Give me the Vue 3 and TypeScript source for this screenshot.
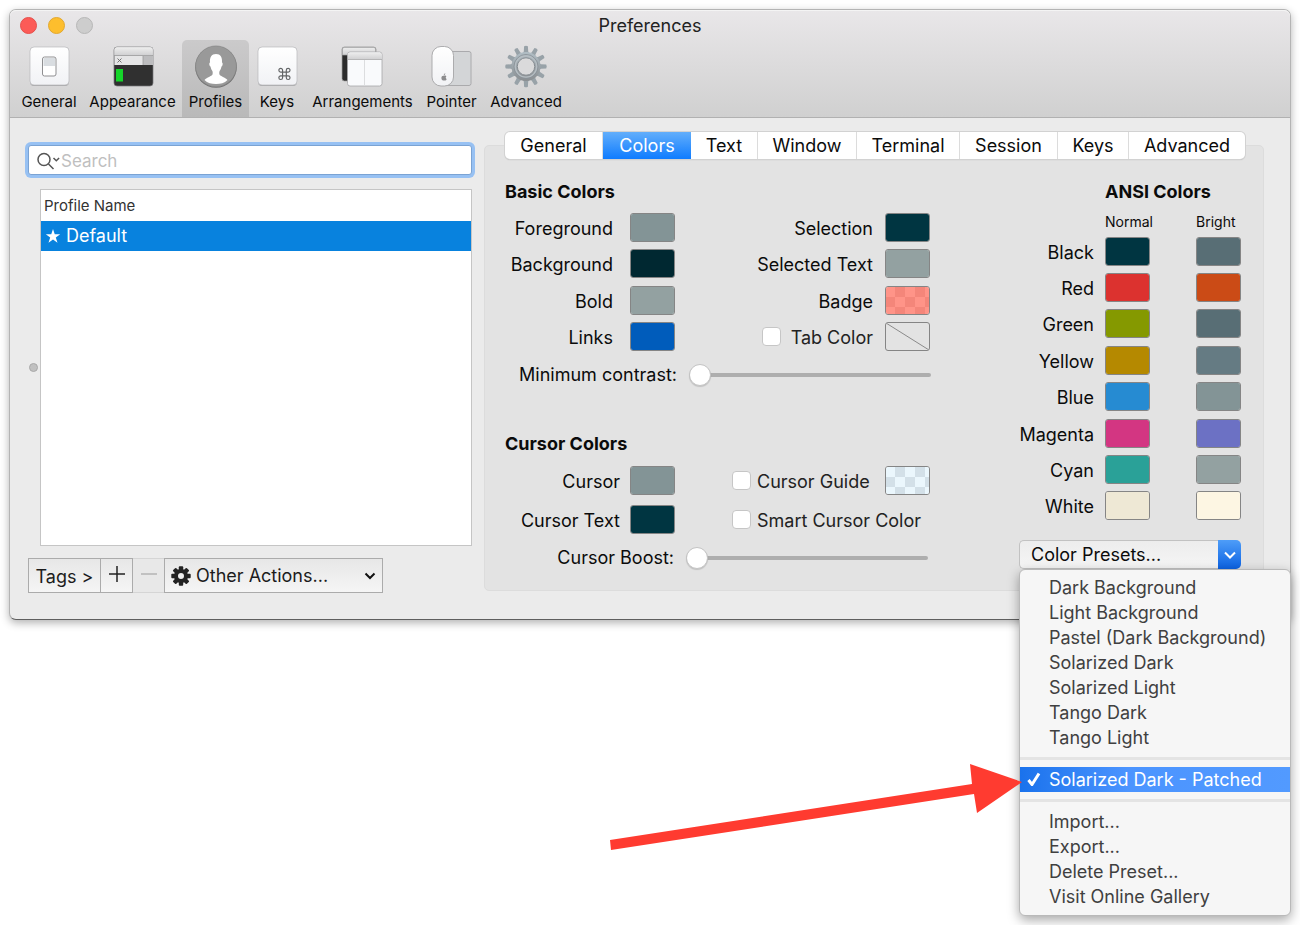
<script setup lang="ts">
import { ref } from 'vue'

interface Well {
  id: string
  label: string
  color: string
}

const tools = ['General', 'Appearance', 'Profiles', 'Keys', 'Arrangements', 'Pointer', 'Advanced']
const activeTool = ref('Profiles')

const tabs = ['General', 'Colors', 'Text', 'Window', 'Terminal', 'Session', 'Keys', 'Advanced']
const activeTab = ref('Colors')

const basic: Well[] = [
  { id: 'foreground', label: 'Foreground', color: '#839496' },
  { id: 'selection', label: 'Selection', color: '#003541' },
  { id: 'background', label: 'Background', color: '#002831' },
  { id: 'selected-text', label: 'Selected Text', color: '#93a1a1' },
  { id: 'bold', label: 'Bold', color: '#93a1a1' },
  { id: 'badge', label: 'Badge', color: '#ff9488' },
  { id: 'links', label: 'Links', color: '#005cbb' },
]

const ansi = [
  { name: 'Black', normal: '#003541', bright: '#586e75' },
  { name: 'Red', normal: '#dc322f', bright: '#cb4b16' },
  { name: 'Green', normal: '#859900', bright: '#586e75' },
  { name: 'Yellow', normal: '#b58900', bright: '#657b83' },
  { name: 'Blue', normal: '#268bd2', bright: '#839496' },
  { name: 'Magenta', normal: '#d33682', bright: '#6c71c4' },
  { name: 'Cyan', normal: '#2aa198', bright: '#93a1a1' },
  { name: 'White', normal: '#eee8d5', bright: '#fdf6e3' },
]

const presetGroups = [
  ['Dark Background', 'Light Background', 'Pastel (Dark Background)', 'Solarized Dark', 'Solarized Light', 'Tango Dark', 'Tango Light'],
  ['Solarized Dark - Patched'],
  ['Import...', 'Export...', 'Delete Preset...', 'Visit Online Gallery'],
]
const activePreset = ref('Solarized Dark - Patched')

const query = ref('')
const contrast = ref(0)
const boost = ref(0)
const teeth = Array.from({ length: 12 }, (_, i) => i * 30)
const cogTeeth = Array.from({ length: 8 }, (_, i) => i * 45)
</script>

<template>
  <main class="desktop">
    <section class="window" aria-label="Preferences">
      <header class="toolbar">
        <div class="titlebar">
          <div class="lights">
            <button class="light red" aria-label="Close"></button>
            <button class="light yellow" aria-label="Minimize"></button>
            <button class="light grey" aria-label="Zoom" disabled></button>
          </div>
          <h1>Preferences</h1>
        </div>
        <nav class="tools">
          <button
            v-for="tool in tools"
            :key="tool"
            class="tool"
            :class="{ active: tool === activeTool }"
            @click="activeTool = tool"
          >
            <svg class="tool-icon" viewBox="0 0 44 44" aria-hidden="true">
              <defs>
                <linearGradient :id="'face-' + tool" x1="0" y1="0" x2="0" y2="1">
                  <stop offset="0" stop-color="#ffffff" />
                  <stop offset="1" stop-color="#f1f2f5" />
                </linearGradient>
                <linearGradient :id="'metal-' + tool" gradientUnits="userSpaceOnUse" x1="0" y1="2" x2="0" y2="43">
                  <stop offset="0" stop-color="#b9c8d0" />
                  <stop offset="1" stop-color="#828486" />
                </linearGradient>
                <linearGradient :id="'bar-' + tool" x1="0" y1="0" x2="0" y2="1">
                  <stop offset="0" stop-color="#eeeeee" />
                  <stop offset="1" stop-color="#cfcfd1" />
                </linearGradient>
              </defs>
              <g v-if="tool === 'General'">
                <rect x="3" y="3" width="39" height="39" rx="4" fill="#a9a9ab" />
                <rect x="3" y="3" width="39" height="38" rx="4" :fill="`url(#face-${tool})`" stroke="#b9b9bb" stroke-width=".7" />
                <rect x="15.500" y="13" width="13.500" height="19" rx="2" fill="#fff" stroke="#8f8f91" />
                <rect x="16.500" y="14" width="11.500" height="8" fill="#d9dde1" />
              </g>
              <g v-else-if="tool === 'Appearance'">
                <rect x="3" y="3" width="39" height="39" rx="3" fill="#303030" stroke="#77777a" stroke-width=".7" />
                <path d="M3.400 21V6a2.700 2.700 0 0 1 2.700-2.700h33a2.700 2.700 0 0 1 2.700 2.700v15z" fill="#e5e5e6" />
                <path d="M3.400 11.500V6a2.700 2.700 0 0 1 2.700-2.700h33a2.700 2.700 0 0 1 2.700 2.700v5.500z" :fill="`url(#bar-${tool})`" />
                <path d="M32 12h9.800v9H32z" fill="#bcbcbe" />
                <path d="M3 11.500h39M32 12v9" stroke="#99999b" stroke-width=".8" />
                <path d="m6.500 14.500 4 4m0-4-4 4" stroke="#666" stroke-width=".9" />
                <rect x="5" y="25" width="7" height="12.500" fill="#15d62a" />
              </g>
              <g v-else-if="tool === 'Profiles'">
                <circle cx="22" cy="23" r="20.800" fill="#707070" />
                <circle cx="22" cy="22.300" r="20.400" fill="#999" stroke="#858585" stroke-width=".6" />
                <path d="M10.500 36c2.500-3 7-3.600 8-5.600.4-1.200.2-2.400-.1-3.400-1-1-1.500-2.600-1.900-4.400-1.200-.4-1.700-3.700-.5-4.100C15.600 13.200 17.500 10 22 10s6.400 3.200 6 8.500c1.200.4.7 3.700-.5 4.100-.4 1.800-.9 3.400-1.900 4.400-.3 1-.5 2.200-.1 3.400 1 2 5.500 2.600 8 5.600-3 3-7 4-11.500 4s-8.500-1-11.500-4z" fill="#fff" />
              </g>
              <g v-else-if="tool === 'Keys'">
                <rect x="3" y="3" width="39" height="39" rx="4" fill="#a9a9ab" />
                <rect x="3" y="3" width="39" height="38" rx="4" :fill="`url(#face-${tool})`" stroke="#b9b9bb" stroke-width=".7" />
                <path transform="translate(22 22.500) scale(.62)" d="M15 6v12a3 3 0 1 0 3-3H6a3 3 0 1 0 3 3V6a3 3 0 1 0-3 3h12a3 3 0 1 0-3-3" fill="none" stroke="#626466" stroke-width="1.900" />
              </g>
              <g v-else-if="tool === 'Arrangements'" transform="translate(-1 0)">
                <rect x="2" y="3" width="34" height="34" rx="2.500" fill="#2c2c2c" stroke="#a0a0a0" stroke-width=".7" />
                <path d="M2.300 11V5.500a2.200 2.200 0 0 1 2.200-2.200h29a2.200 2.200 0 0 1 2.200 2.200V11z" :fill="`url(#bar-${tool})`" stroke="#a0a0a2" stroke-width=".7" />
                <rect x="7.500" y="8" width="34.500" height="34" rx="2.500" fill="#f9fafc" stroke="#a6a6a8" stroke-width=".8" />
                <path d="M7.900 15.500v-5a2.200 2.200 0 0 1 2.200-2.100h29.500a2.200 2.200 0 0 1 2.100 2.100v5z" :fill="`url(#bar-${tool})`" />
                <path d="M7.500 15.500H42" stroke="#a9a9ab" stroke-width=".8" />
                <path d="M24.500 16v25.500" stroke="#dcdddf" />
              </g>
              <g v-else-if="tool === 'Pointer'" transform="translate(-1 0)">
                <rect x="14" y="7.500" width="28" height="34" rx="2" fill="#d3d5d7" stroke="#a5a5a7" stroke-width=".9" />
                <rect x="3" y="2.500" width="21.500" height="39.500" rx="9" :fill="`url(#face-${tool})`" stroke="#a5a5a7" stroke-width=".9" />
                <path d="M15 31.800c1.200-.6 2-.3 2.400.4-1 .8-.8 2.300.3 2.700-.6 1.600-1.400 2-2.700 1.500-1.500.6-2.700-.8-2.600-2.700.1-1.600 1.300-2.400 2.600-1.900zM14.800 31.200c0-1 .6-1.700 1.500-1.900 0 1-.6 1.700-1.500 1.900z" fill="#8c8c8e" />
              </g>
              <g v-else>
                <path
                  v-for="angle in teeth"
                  :key="angle"
                  :transform="`rotate(${angle} 22 22.500)`"
                  d="M18 10.500 19.800 7.500 20.100 2.300Q22 1.200 23.900 2.300L24.200 7.500 26 10.500z"
                  fill="#98a2a8"
                />
                <circle cx="22" cy="22.500" r="11.500" fill="none" :stroke="`url(#metal-${tool})`" stroke-width="6" />
                <circle cx="22" cy="22.500" r="12" fill="none" stroke="#8a9298" stroke-width=".9" />
                <circle cx="22" cy="22.500" r="10.700" fill="none" stroke="#b6bec3" stroke-width="1.200" />
                <circle cx="22" cy="22.500" r="8.700" fill="#dadadb" stroke="#7f868b" stroke-width=".9" />
              </g>
            </svg>
            <span>{{ tool }}</span>
          </button>
        </nav>
      </header>

      <div class="body">
        <aside class="profiles">
          <div class="search">
            <svg class="search-icon" viewBox="0 0 24 18" aria-hidden="true">
              <circle cx="7" cy="7.500" r="6" />
              <path d="m11.500 12 5 5M16.500 6l2.800 2.800L22.100 6" />
            </svg>
            <input v-model="query" type="search" placeholder="Search" aria-label="Search profiles" />
          </div>
          <div class="list-row">
            <div class="splitter"><span class="grip"></span></div>
            <div class="list">
              <table>
                <thead>
                  <tr><th scope="col">Profile Name</th></tr>
                </thead>
                <tbody>
                  <tr class="selected">
                    <td>
                      <svg class="star" viewBox="0 0 16 16" aria-hidden="true">
                        <path d="m8 1 1.750 5.200h5.450l-4.400 3.200 1.700 5.300L8 11.500l-4.500 3.200 1.700-5.300-4.400-3.200h5.450z" />
                      </svg>Default
                    </td>
                  </tr>
                </tbody>
              </table>
            </div>
          </div>
          <div class="actions">
            <button class="action tags">Tags &gt;</button>
            <button class="action square" aria-label="Add profile">
              <svg viewBox="0 0 16 16" aria-hidden="true"><path d="M8 0v16M0 8h16" /></svg>
            </button>
            <button class="action square faded" aria-label="Remove profile" disabled>
              <svg viewBox="0 0 16 16" aria-hidden="true"><path d="M0 8h16" /></svg>
            </button>
            <div class="other">
              <svg class="cog" viewBox="0 0 20 20" aria-hidden="true">
                <path v-for="angle in cogTeeth" :key="angle" :transform="`rotate(${angle} 10 10)`" d="M7.800 6V1.200Q7.800.3 8.700.3h2.600q.9 0 .9.900V6z" />
                <circle cx="10" cy="10" r="5" />
              </svg>
              <select aria-label="Other actions">
                <option>Other Actions...</option>
              </select>
              <svg class="chevron" viewBox="0 0 12 8" aria-hidden="true"><path d="m1.500 1.500 4.500 4.500 4.500-4.500" /></svg>
            </div>
          </div>
        </aside>

        <div class="settings">
          <div class="tabs" role="tablist">
            <button
              v-for="tab in tabs"
              :key="tab"
              role="tab"
              :aria-selected="tab === activeTab"
              :class="{ active: tab === activeTab }"
              @click="activeTab = tab"
            >{{ tab }}</button>
          </div>
          <div class="panel">
            <div class="sections">
              <h2>Basic Colors</h2>
              <div class="basic-grid">
                <template v-for="well in basic" :key="well.id">
                  <label :for="well.id">{{ well.label }}</label>
                  <input :id="well.id" class="well" :class="well.id" type="color" :value="well.color" />
                </template>
                <div class="check tab-check">
                  <input id="tab-color" type="checkbox" /><label for="tab-color">Tab Color</label>
                </div>
                <button class="well empty" aria-label="Tab color value">
                  <svg viewBox="0 0 43 27" preserveAspectRatio="none" aria-hidden="true"><path d="M0 0 43 27" /></svg>
                </button>
              </div>
              <div class="slider contrast">
                <label for="contrast">Minimum contrast:</label>
                <input id="contrast" v-model="contrast" type="range" min="0" max="100" />
              </div>

              <h2>Cursor Colors</h2>
              <div class="cursor-grid">
                <label for="cursor">Cursor</label>
                <input id="cursor" class="well" type="color" value="#839496" />
                <div class="check">
                  <input id="guide" type="checkbox" /><label for="guide">Cursor Guide</label>
                </div>
                <input class="well guide" type="color" value="#ebf7fd" aria-label="Cursor guide color" />
                <label for="cursor-text">Cursor Text</label>
                <input id="cursor-text" class="well" type="color" value="#003541" />
                <div class="check wide">
                  <input id="smart" type="checkbox" /><label for="smart">Smart Cursor Color</label>
                </div>
              </div>
              <div class="slider">
                <label for="boost">Cursor Boost:</label>
                <input id="boost" v-model="boost" type="range" min="0" max="100" />
              </div>
            </div>

            <div class="ansi">
              <h2>ANSI Colors</h2>
              <table>
                <thead>
                  <tr>
                    <td></td>
                    <th scope="col">Normal</th>
                    <th scope="col">Bright</th>
                  </tr>
                </thead>
                <tbody>
                  <tr v-for="row in ansi" :key="row.name">
                    <th scope="row">{{ row.name }}</th>
                    <td><input class="well" type="color" :value="row.normal" :aria-label="row.name + ' normal'" /></td>
                    <td><input class="well" type="color" :value="row.bright" :aria-label="row.name + ' bright'" /></td>
                  </tr>
                </tbody>
              </table>
              <div class="presets">
                <select aria-label="Color presets">
                  <option>Color Presets...</option>
                </select>
                <span class="cap">
                  <svg viewBox="0 0 12 8" aria-hidden="true"><path d="m1 1.500 5 5 5-5" /></svg>
                </span>
                <div class="menu" role="menu">
                  <div v-for="(group, index) in presetGroups" :key="index" class="group" role="group">
                    <button
                      v-for="preset in group"
                      :key="preset"
                      role="menuitem"
                      :class="{ active: preset === activePreset }"
                      @click="activePreset = preset"
                    >
                      <svg v-if="preset === activePreset" class="tick" viewBox="0 0 14 14" aria-hidden="true"><path d="m1.500 8 3.500 4.500L12 1.500" /></svg>
                      {{ preset }}
                    </button>
                  </div>
                  <svg class="arrow" viewBox="0 0 412 86" aria-hidden="true">
                    <path d="M0 76 362 20 360 0 412 18 367 49 364 30 1 86z" />
                  </svg>
                </div>
              </div>
            </div>
          </div>
        </div>
      </div>
    </section>
  </main>
</template>

<style>
body {
  background: #fff;
}
</style>

<style scoped>
* {
  box-sizing: border-box;
}

.desktop {
  min-height: 100vh;
  padding: 9px;
  font-family: Inter, "Liberation Sans", sans-serif;
  font-size: 18px;
  line-height: 24px;
  color: #0b0b0b;
}

button,
input,
select {
  margin: 0;
  padding: 0;
  border: 0;
  background: none;
  font: inherit;
  color: inherit;
  outline: none;
}

svg {
  display: block;
  flex: none;
}

h1,
h2 {
  margin: 0;
  font-size: 18px;
  line-height: 24px;
}

.window {
  border: 1px solid #b4b4b4;
  border-bottom-color: #5e5e5e;
  border-radius: 7px;
  background: #ebebeb;
  box-shadow: 0 3px 8px rgba(0, 0, 0, 0.3);
}

.toolbar {
  border-bottom: 1px solid #b1b1b1;
  border-radius: 6px 6px 0 0;
  background: linear-gradient(#e9e7e9, #d0d0d0);
  box-shadow: inset 0 1px #f4f4f4;
}

.titlebar {
  display: grid;
  grid-template-columns: 1fr auto 1fr;
  align-items: center;
  height: 30px;
}

h1 {
  padding-top: 2px;
  font-weight: 400;
  color: #222;
}

.lights {
  display: flex;
  gap: 11px;
  padding-left: 10px;
}

.light {
  width: 17px;
  height: 17px;
  border: 1px solid;
  border-radius: 50%;
}

.red {
  background: #fc5b57;
  border-color: #e5504c;
}

.yellow {
  background: #fdbe2d;
  border-color: #e2a830;
}

.grey {
  background: #cdcdcd;
  border-color: #b7b7b7;
}

.tools {
  display: grid;
  grid-template-columns: 68px 99px 67px 56px 115px 63px 86px;
  padding-left: 5px;
}

.tool {
  display: flex;
  flex-direction: column;
  align-items: center;
  height: 77px;
  padding-top: 4px;
  border-radius: 5px 5px 0 0;
  font-size: 15px;
  line-height: 20px;
}

.tool.active {
  background: linear-gradient(#cbcacb, #b9b9b9);
}

.tool-icon {
  width: 44px;
  height: 44px;
  margin-bottom: 4px;
}

.body {
  display: grid;
  grid-template-columns: 444fr 780fr;
  gap: 12px;
  padding: 14px 26px 26px 18px;
}

.profiles {
  display: flex;
  flex-direction: column;
  padding-top: 13px;
}

.search {
  display: flex;
  align-items: center;
  height: 30px;
  padding: 2px 0 0 8px;
  border: 1px solid #7ba3d3;
  border-radius: 3px;
  background: #fff;
  box-shadow: 0 0 0 3px #97c1f3;
}

.search-icon {
  width: 24px;
  height: 18px;
  fill: none;
  stroke: #555;
  stroke-width: 1.5;
}

.search input {
  flex: 1;
  min-width: 0;
  appearance: none;
  font-size: 17px;
}

.search input::placeholder {
  color: #bfbfbf;
  opacity: 1;
}

.list-row {
  display: flex;
  flex: 1;
  margin: 14px 0 12px;
}

.splitter {
  display: flex;
  align-items: center;
  width: 12px;
}

.grip {
  width: 9px;
  height: 9px;
  margin-left: 1px;
  border: 1px solid #a9a9a9;
  border-radius: 50%;
  background: #c0c0c0;
}

.list {
  flex: 1;
  border: 1px solid #c5c5c5;
  background: #fff;
}

.list table {
  width: 100%;
  border-collapse: collapse;
}

.list th {
  height: 31px;
  padding: 0 3px;
  font-size: 15px;
  line-height: 20px;
  font-weight: 400;
  text-align: left;
  color: #333;
}

.list td {
  display: flex;
  align-items: center;
  gap: 5px;
  height: 30px;
  padding: 0 4px;
  background: #0882de;
  color: #fff;
}

.star {
  width: 16px;
  height: 16px;
  fill: #fff;
}

.actions {
  display: flex;
}

.action,
.other {
  height: 35px;
  border: 1px solid #ababab;
  background: linear-gradient(#e7e7e7, #f5f5f5);
  color: #1c1c1c;
}

.tags {
  width: 73px;
  padding-top: 2px;
}

.square {
  display: flex;
  align-items: center;
  justify-content: center;
  width: 32px;
  padding-bottom: 3px;
  border-left: 0;
}

.square svg {
  width: 16px;
  height: 16px;
  stroke: #222;
  stroke-width: 1.5;
}

.square.faded {
  width: 31px;
  border-color: #d5d5d5;
  border-right: 0;
  background: #e8e8e8;
}

.square.faded svg {
  stroke: #b5b5b5;
}

.other {
  display: flex;
  align-items: center;
  width: 219px;
  padding: 1px 6px 0;
}

.cog {
  width: 20px;
  height: 20px;
  margin-right: 5px;
  fill: #222;
}

.cog circle {
  fill: #eee;
  stroke: #222;
  stroke-width: 4;
}

.other select {
  flex: 1;
  min-width: 0;
  appearance: none;
}

.chevron {
  width: 12px;
  height: 8px;
  fill: none;
  stroke: #111;
  stroke-width: 2;
}

.settings {
  min-width: 0;
  padding-bottom: 2px;
}

.tabs {
  position: relative;
  display: grid;
  grid-template-columns: 98fr 88fr 67fr 99fr 103fr 98fr 71fr 116fr;
  height: 27px;
  margin: 0 19px 0 21px;
  border-radius: 5px;
  background: #fff;
  box-shadow: 0 0 0 1px #d2d2d2, 0 1px 1px #aaa;
}

.tabs button {
  border-right: 1px solid #dcdcdc;
}

.tabs button:last-child {
  border-right: 0;
}

.tabs button.active {
  border-right: 0;
  background: linear-gradient(#62aefb, #0f7cff);
  color: #fff;
}

.panel {
  display: flex;
  justify-content: space-between;
  margin-top: -14px;
  padding: 34px 22px 20px 20px;
  border: 1px solid #dcdcdc;
  border-radius: 5px;
  background: #e3e3e3;
}

.sections {
  width: 426px;
}

.basic-grid,
.cursor-grid {
  display: grid;
  align-items: center;
  justify-items: end;
  width: 425px;
  margin-top: 5px;
}

.basic-grid {
  grid-template-columns: 113px 45px 1fr 45px;
  grid-auto-rows: 1fr;
  column-gap: 12px;
  height: 146px;
}

.basic-grid > label:nth-child(4n + 1) {
  padding-right: 5px;
}

.cursor-grid {
  grid-template-columns: 115px 45px minmax(0, 1fr) 45px;
  grid-auto-rows: 39px;
  column-gap: 10px;
}

.basic-grid label,
.cursor-grid label {
  padding-top: 3px;
}

.well {
  display: block;
  width: 45px;
  height: 29px;
  overflow: hidden;
  border: 1px solid #858585;
  border-radius: 3px;
  appearance: none;
}

.well::-webkit-color-swatch-wrapper {
  padding: 0;
}

.well::-webkit-color-swatch {
  border: 0;
  border-radius: 0;
}

.badge::-webkit-color-swatch {
  background-image: conic-gradient(#f4867a 25%, transparent 0 50%, #f4867a 0 75%, transparent 0);
  background-position: -1px 0;
  background-size: 20px 20px;
}

.guide::-webkit-color-swatch {
  background-image: conic-gradient(#d3e0e8 25%, transparent 0 50%, #d3e0e8 0 75%, transparent 0);
  background-position: -1px 0;
  background-size: 20px 20px;
}

.empty svg {
  width: 100%;
  height: 100%;
  stroke: #8a8a8a;
}

.check {
  display: flex;
  align-items: center;
  gap: 6px;
  color: #222;
}

.tab-check {
  gap: 10px;
}

.cursor-grid .check {
  justify-self: start;
  padding-left: 47px;
  white-space: nowrap;
}

.cursor-grid .wide {
  grid-column: span 2;
}

.check input {
  flex: none;
  width: 19px;
  height: 19px;
  border: 1px solid #c6c6c6;
  border-radius: 4px;
  background: #fff;
  appearance: none;
}

.check input:checked {
  background: #2f87f7;
}

.slider {
  display: grid;
  grid-template-columns: 169px 1fr;
  gap: 12px;
  align-items: center;
  height: 24px;
  margin: 7px 3px 0 0;
  text-align: right;
}

.slider.contrast {
  grid-template-columns: 172px 1fr;
  margin: 8px 0 45px;
}

.slider label {
  white-space: nowrap;
}

.slider input {
  width: 100%;
  height: 22px;
  appearance: none;
}

.slider input::-webkit-slider-runnable-track {
  height: 4px;
  border-radius: 2px;
  background: #aeaeae;
}

.slider input::-webkit-slider-thumb {
  width: 22px;
  height: 22px;
  margin-top: -9px;
  border: 1px solid #c4c4c4;
  border-radius: 50%;
  background: #fff;
  box-shadow: 0 1px 1px rgba(0, 0, 0, 0.15);
  appearance: none;
}

.ansi {
  width: 222px;
}

.ansi h2 {
  padding-left: 86px;
  white-space: nowrap;
}

.ansi table {
  width: 100%;
  border-collapse: collapse;
}

.ansi td,
.ansi th {
  padding: 0;
  font-weight: 400;
}

.ansi thead th {
  width: 91px;
  height: 29px;
  padding-top: 6px;
  font-size: 14px;
  line-height: 20px;
  text-align: left;
}

.ansi thead th:last-child {
  width: 45px;
}

.ansi tbody {
  height: 291px;
}

.ansi tbody th {
  height: 36px;
  padding: 3px 11px 0 0;
  text-align: right;
}

.presets {
  position: relative;
  display: flex;
  height: 29px;
  margin-top: 16px;
}

.presets select {
  flex: 1;
  min-width: 0;
  padding-left: 11px;
  border: 1px solid #c2c2c2;
  border-right: 0;
  border-radius: 5px 0 0 5px;
  background: linear-gradient(#ededed, #f5f5f5);
  appearance: none;
}

.cap {
  display: flex;
  align-items: center;
  justify-content: center;
  width: 23px;
  border-radius: 0 5px 5px 0;
  background: linear-gradient(#4e9df8, #0c62e2);
}

.cap svg {
  width: 12px;
  height: 8px;
  fill: none;
  stroke: #fff;
  stroke-width: 2;
}

.menu {
  position: absolute;
  top: 100%;
  left: 0;
  width: 272px;
  padding: 5px 0 6px;
  border: 1px solid #b9b9b9;
  border-radius: 6px;
  background: #f6f6f6;
  box-shadow: 0 4px 12px rgba(0, 0, 0, 0.35);
  color: #404040;
}

.group + .group::before {
  content: "";
  display: block;
  height: 3px;
  margin: 7px 0;
  background: #e4e4e4;
}

.menu button {
  position: relative;
  display: block;
  width: 100%;
  height: 25px;
  padding-left: 29px;
  text-align: left;
  white-space: nowrap;
}

.menu button.active {
  background: linear-gradient(90deg, #1a72ec, #4b94ff 40%, #529aff);
  color: #fff;
}

.tick {
  position: absolute;
  top: 5px;
  left: 7px;
  width: 14px;
  height: 14px;
  fill: none;
  stroke: #fff;
  stroke-width: 3;
}

.arrow {
  position: absolute;
  top: 194px;
  right: calc(100% - 2px);
  width: 412px;
  height: 86px;
  fill: #ff3b30;
}
</style>
